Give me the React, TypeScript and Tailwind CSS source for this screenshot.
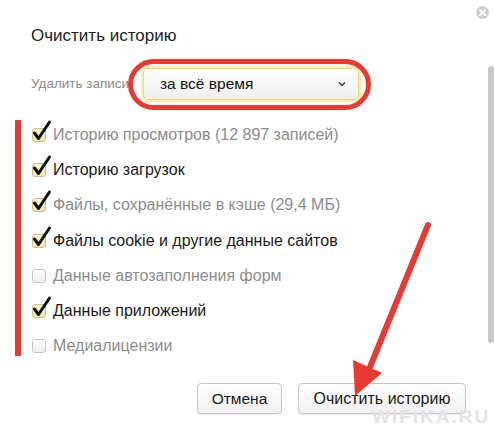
import React from "react";

type Item = { label: string; checked: boolean; muted: boolean };

const items: Item[] = [
  { label: "Историю просмотров (12 897 записей)", checked: true, muted: true },
  { label: "Историю загрузок", checked: true, muted: false },
  { label: "Файлы, сохранённые в кэше (29,4 МБ)", checked: true, muted: true },
  { label: "Файлы cookie и другие данные сайтов", checked: true, muted: false },
  { label: "Данные автозаполнения форм", checked: false, muted: true },
  { label: "Данные приложений", checked: true, muted: false },
  { label: "Медиалицензии", checked: false, muted: true },
];

function CheckBox({ checked }: { checked: boolean }) {
  return (
    <span className="relative inline-block w-[14px] h-[14px] shrink-0">
      <span
        className={
          checked
            ? "absolute inset-0 rounded-[3px] border border-[#c9bf8e] bg-gradient-to-b from-[#fbf6d8] to-[#f1e6ad]"
            : "absolute inset-0 rounded-[3px] border border-[#c4c4c4] bg-gradient-to-b from-[#ffffff] to-[#ececec]"
        }
      />
      {checked && (
        <svg className="absolute left-[1px] top-[-7px] overflow-visible" width="18" height="20" viewBox="0 0 18 20">
          <path d="M1.5 12 L5.5 17.5 L16.5 1" fill="none" stroke="#111" strokeWidth="3" strokeLinecap="round" strokeLinejoin="round" />
        </svg>
      )}
    </span>
  );
}

export default function App() {
  return (
    <div className="relative w-[495px] h-[434px] bg-white overflow-hidden" style={{ fontFamily: '"Liberation Sans", Arial, sans-serif' }}>
      {/* close button */}
      <div className="absolute right-[6px] top-[6px] w-[13px] h-[13px] rounded-full bg-[#cdcdcd] flex items-center justify-center">
        <svg width="7" height="7" viewBox="0 0 7 7">
          <path d="M1 1 L6 6 M6 1 L1 6" stroke="#fff" strokeWidth="1.8" strokeLinecap="round" />
        </svg>
      </div>

      {/* scrollbar thumb */}
      <div className="absolute left-[488px] top-[66px] w-[6px] h-[277px] rounded-full bg-[#c9c9c9]" />

      <div className="pl-[31px] pt-[25px]">
        <h1 className="text-[17px] leading-[22px] text-[#222]">Очистить историю</h1>

        <div className="mt-[21px] flex items-center h-[32px]">
          <span className="w-[112px] text-[13.5px] text-[#8a8a8a]">Удалить записи:</span>
          <div className="w-[216px] h-[32px] rounded-[4px] border border-[#ecd67a] shadow-[0_0_0_2px_#fbefb4] bg-gradient-to-b from-[#fdfdfd] to-[#efefef] flex items-center justify-between pl-[16px] pr-[12px]">
            <span className="text-[15.5px] text-[#111]">за всё время</span>
            <svg width="8" height="6" viewBox="0 0 8 6">
              <path d="M1 1.5 L4 4.5 L7 1.5" fill="none" stroke="#333" strokeWidth="1.4" />
            </svg>
          </div>
        </div>

        <ul className="mt-[17px]">
          {items.map((it) => (
            <li key={it.label} className="h-[35.3px] flex items-center gap-[7px] pl-[1px]">
              <CheckBox checked={it.checked} />
              <span className={"text-[16px] " + (it.muted ? "text-[#8c8c8c]" : "text-[#1a1a1a]")}>{it.label}</span>
            </li>
          ))}
        </ul>

        <div className="mt-[19px] flex gap-[16px] pl-[166px]">
          <button className="w-[85px] h-[31px] rounded-[4px] border border-[#c6c6c6] bg-gradient-to-b from-white to-[#f0f0f0] text-[15.5px] text-[#1a1a1a] shadow-[0_1px_1px_rgba(0,0,0,0.08)]">
            Отмена
          </button>
          <button className="w-[168px] h-[31px] rounded-[4px] border border-[#c6c6c6] bg-gradient-to-b from-white to-[#f0f0f0] text-[16px] text-[#1a1a1a] shadow-[0_1px_1px_rgba(0,0,0,0.08)]">
            Очистить историю
          </button>
        </div>
      </div>

      {/* watermark */}
      <div className="absolute left-[372px] top-[403px] text-[19px] font-bold tracking-[2px] text-[#e4e4e4]">
        WIFIKA.RU
      </div>

      {/* annotations */}
      <div className="absolute left-[128px] top-[59px] w-[243px] h-[51px] rounded-full border-[5px] border-[#e63a32]" />
      <div className="absolute left-[15px] top-[120px] w-[6px] h-[236px] bg-[#e63a32]" />
      <svg className="absolute left-0 top-0 pointer-events-none" width="495" height="434" viewBox="0 0 495 434">
        <path d="M428 225 L370 367" stroke="#e63a32" strokeWidth="6" strokeLinecap="round" />
        <path d="M353 360 L382 373 L355 396 Z" fill="#e63a32" />
      </svg>
    </div>
  );
}
